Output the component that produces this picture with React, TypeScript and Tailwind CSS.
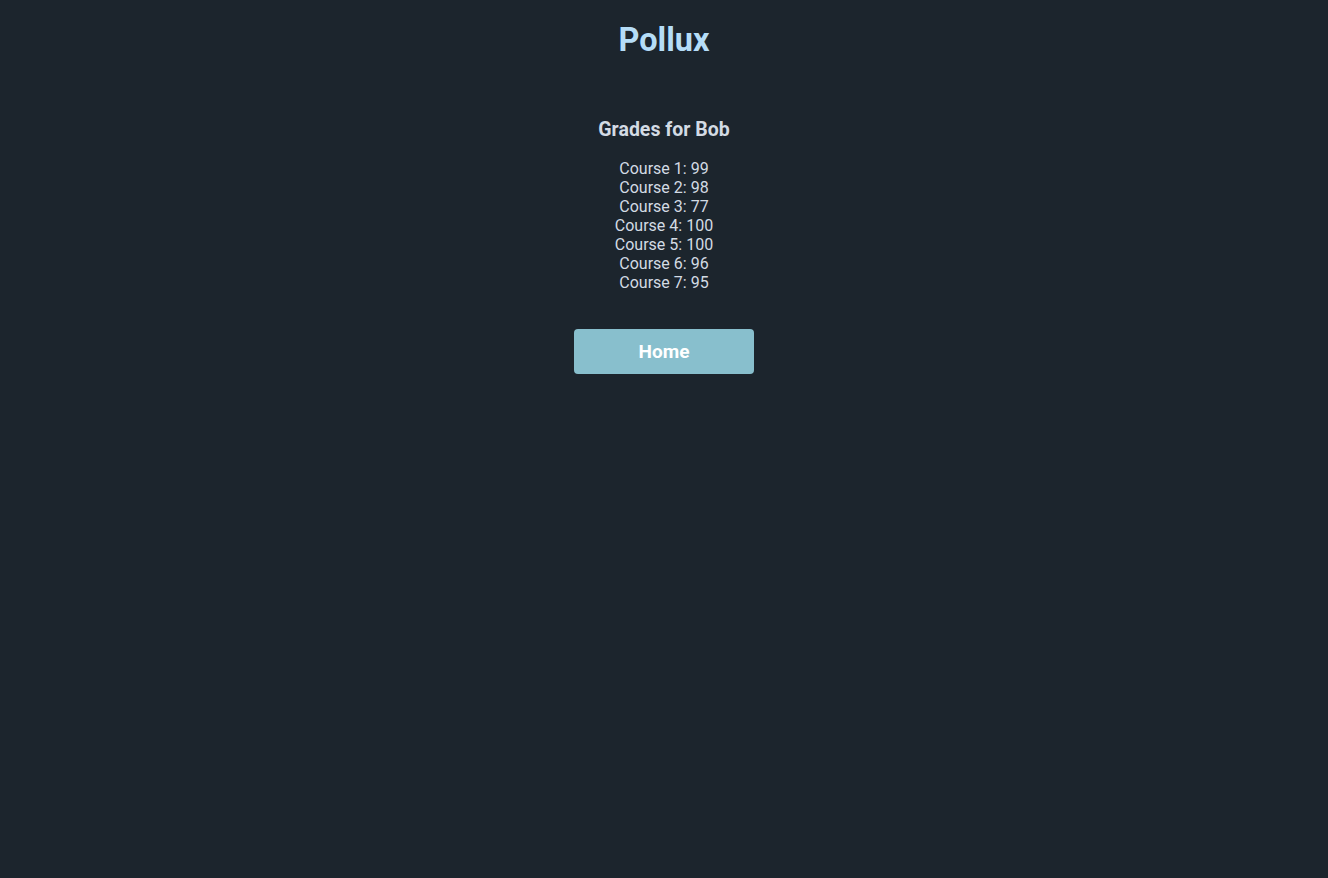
import React from "react";

const grades = [99, 98, 77, 100, 100, 96, 95];

export default function App() {
  return (
    <div className="min-h-[878px] w-full bg-[#1c252d] font-['Roboto',sans-serif] flex flex-col items-center">
      <h1 className="mt-[22px] text-[32.5px] leading-[37px] font-bold text-[#b5ddf7]">Pollux</h1>
      <h2 className="mt-[59px] text-[19.5px] leading-[23px] font-bold text-[#d3dbe4]">Grades for Bob</h2>
      <div className="mt-[18px] flex flex-col items-center text-[16px] leading-[19px] text-[#d3dbe4]">
        {grades.map((g, i) => (
          <div key={i}>Course {i + 1}: {g}</div>
        ))}
      </div>
      <button className="mt-[37px] w-[180px] h-[45px] pt-[2px] rounded-[4px] bg-[#88bfcd] text-white text-[19px] font-bold">
        Home
      </button>
    </div>
  );
}
